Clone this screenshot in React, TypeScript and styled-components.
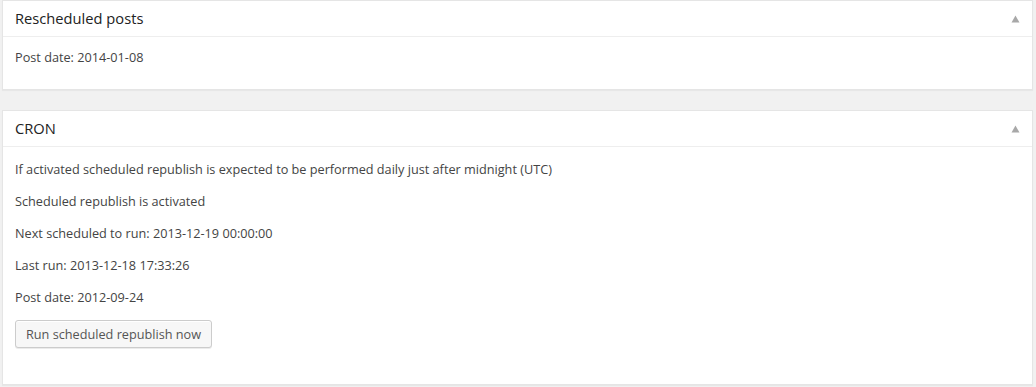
import React from "react";
import styled, { createGlobalStyle } from "styled-components";

const Global = createGlobalStyle`
  html, body { margin: 0; padding: 0; background: #f1f1f1; }
  body {
    font-family: "Open Sans", "Noto Sans", sans-serif;
    font-size: 13px;
    color: #444;
  }
`;

const Wrap = styled.div`
  margin: 0 3px 0 2px;
`;

const Postbox = styled.div`
  background: #fff;
  border: 1px solid #e5e5e5;
  box-shadow: 0 1px 1px rgba(0, 0, 0, 0.04);
  margin-bottom: 20px;
`;

const Header = styled.div`
  display: flex;
  align-items: center;
  justify-content: space-between;
  border-bottom: 1px solid #eee;
`;

const Title = styled.h3`
  margin: 0;
  padding: 8px 12px;
  font-size: 14.7px;
  font-weight: 400;
  line-height: 19px;
  color: #222;
`;

const Toggle = styled.div`
  width: 27px;
  height: 30px;
  display: flex;
  align-items: center;
  justify-content: center;
  margin-right: 3px;
`;

const Inside = styled.div`
  margin: 11px 0;
  padding: 0 12px 12px;
  font-size: 12.7px;
  line-height: 18px;
`;

const P = styled.p`
  margin: 13px 0;
  line-height: 19px;
`;

const Button = styled.button`
  display: inline-block;
  height: 28px;
  margin: 0;
  padding: 0 10px 1px;
  font-family: inherit;
  font-size: 12.7px;
  line-height: 26px;
  color: #555;
  background: #f7f7f7;
  border: 1px solid #ccc;
  border-radius: 3px;
  box-shadow: inset 0 1px 0 #fff, 0 1px 0 rgba(0, 0, 0, 0.08);
  cursor: pointer;
  white-space: nowrap;
  vertical-align: top;
`;

const Arrow = () => (
  <svg width="9" height="8" viewBox="0 0 9 8">
    <polygon points="4.5,0.5 8.5,7.5 0.5,7.5" fill="#a8a8a8" />
  </svg>
);

const Box: React.FC<{ title: string; children: React.ReactNode }> = ({ title, children }) => (
  <Postbox>
    <Header>
      <Title>{title}</Title>
      <Toggle>
        <Arrow />
      </Toggle>
    </Header>
    <Inside>{children}</Inside>
  </Postbox>
);

export default function App() {
  return (
    <Wrap>
      <Global />
      <Box title="Rescheduled posts">Post date: 2014-01-08</Box>
      <Box title="CRON">
        <P>If activated scheduled republish is expected to be performed daily just after midnight (UTC)</P>
        <P>Scheduled republish is activated</P>
        <P>Next scheduled to run: 2013-12-19 00:00:00</P>
        <P>Last run: 2013-12-18 17:33:26</P>
        <P>Post date: 2012-09-24</P>
        <P>
          <Button type="button">Run scheduled republish now</Button>
        </P>
      </Box>
    </Wrap>
  );
}
